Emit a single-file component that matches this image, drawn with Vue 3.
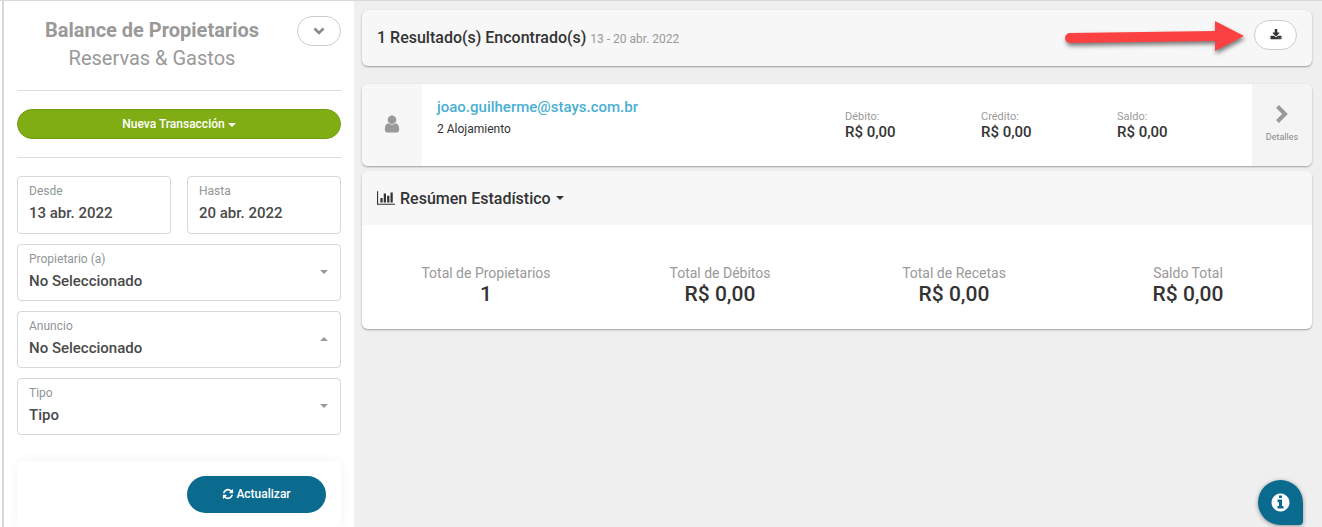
<script setup>
import { ref } from 'vue'

const from = ref('13 abr. 2022')
const to = ref('20 abr. 2022')

const filters = ref([
  { id: 'owner', label: 'Propietario (a)', value: 'No Seleccionado', up: false },
  { id: 'listing', label: 'Anuncio', value: 'No Seleccionado', up: true },
  { id: 'type', label: 'Tipo', value: 'Tipo', up: false },
])

const amounts = [
  { label: 'Débito:', value: 'R$ 0,00' },
  { label: 'Crédito:', value: 'R$ 0,00' },
  { label: 'Saldo:', value: 'R$ 0,00' },
]

const totals = [
  { label: 'Total de Propietarios', value: '1' },
  { label: 'Total de Débitos', value: 'R$ 0,00' },
  { label: 'Total de Recetas', value: 'R$ 0,00' },
  { label: 'Saldo Total', value: 'R$ 0,00' },
]

const showStats = ref(true)
</script>

<template>
  <div class="layout">
    <aside class="sidebar">
      <header class="side-head">
        <h1 class="title">
          Balance de Propietarios
          <small>Reservas &amp; Gastos</small>
        </h1>
        <button class="pill" type="button" aria-label="Más opciones">
          <svg class="icon-down" viewBox="0 0 12 8"><path d="M1.5 1.5L6 6l4.500-4.500" /></svg>
        </button>
      </header>

      <div class="new-wrap">
        <button class="btn-new" type="button">Nueva Transacción <span class="caret"></span></button>
      </div>

      <form class="filters" @submit.prevent>
        <div class="dates">
          <div class="field">
            <label for="from">Desde</label>
            <input id="from" v-model="from" type="text" />
          </div>
          <div class="field">
            <label for="to">Hasta</label>
            <input id="to" v-model="to" type="text" />
          </div>
        </div>
        <div v-for="f in filters" :key="f.id" class="field">
          <label :for="f.id">{{ f.label }}</label>
          <select :id="f.id" v-model="f.value">
            <option>{{ f.value }}</option>
          </select>
          <span class="caret field-caret" :class="{ up: f.up }"></span>
        </div>
        <div class="actions">
          <button class="btn-update" type="submit">
            <svg viewBox="0 0 1792 1792"><path d="M1639 1056q0 5-1 7-64 268-268 434.500t-478 166.500q-146 0-282.500-55t-243.500-157l-129 129q-19 19-45 19t-45-19-19-45v-448q0-26 19-45t45-19h448q26 0 45 19t19 45-19 45l-137 137q71 66 161 102t187 36q134 0 250-65t186-179q11-17 53-117 8-23 30-23h192q13 0 22.500 9.500t9.500 22.500zm25-800v448q0 26-19 45t-45 19h-448q-26 0-45-19t-19-45 19-45l138-138q-148-137-349-137-134 0-250 65t-186 179q-11 17-53 117-8 23-30 23h-199q-13 0-22.500-9.500t-9.500-22.500v-7q65-268 270-434.500t480-166.500q146 0 284 55.500t245 156.500l130-129q19-19 45-19t45 19 19 45z" /></svg>
            Actualizar
          </button>
        </div>
      </form>
    </aside>

    <main class="content">
      <section class="card result-head">
        <h2>1 Resultado(s) Encontrado(s) <small>13 - 20 abr. 2022</small></h2>
        <svg class="arrow" viewBox="0 0 184 40">
          <path d="M8 15L153 13V3L182 18L153 33V23L8 25A5 5 0 0 1 8 15Z" />
        </svg>
        <button class="pill" type="button" aria-label="Descargar">
          <svg class="icon-download" viewBox="0 0 1792 1792"><path d="M1344 1344q0-26-19-45t-45-19-45 19-19 45 19 45 45 19 45-19 19-45zm256 0q0-26-19-45t-45-19-45 19-19 45 19 45 45 19 45-19 19-45zm128-224v320q0 40-28 68t-68 28h-1472q-40 0-68-28t-28-68v-320q0-40 28-68t68-28h465l135 136q58 56 136 56t136-56l136-136h464q40 0 68 28t28 68zm-325-569q17 41-14 70l-448 448q-18 19-45 19t-45-19l-448-448q-31-29-14-70 17-39 59-39h256v-448q0-26 19-45t45-19h256q26 0 45 19t19 45v448h256q42 0 59 39z" /></svg>
        </button>
      </section>

      <section class="card owner">
        <div class="avatar">
          <svg viewBox="0 0 1792 1792"><path d="M1536 1399q0 109-62.500 187t-150.500 78h-854q-88 0-150.500-78t-62.500-187q0-85 8.500-160.500t31.500-152 58.500-131 94-89 134.500-34.500q131 128 313 128t313-128q76 0 134.500 34.500t94 89 58.500 131 31.500 152 8.500 160.500zm-256-887q0 159-112.500 271.500t-271.500 112.500-271.500-112.500-112.500-271.500 112.500-271.500 271.500-112.500 271.500 112.500 112.500 271.500z" /></svg>
        </div>
        <div class="owner-info">
          <a href="#">joao.guilherme@stays.com.br</a>
          <p>2 Alojamiento</p>
        </div>
        <dl class="amounts">
          <div v-for="a in amounts" :key="a.label">
            <dt>{{ a.label }}</dt>
            <dd>{{ a.value }}</dd>
          </div>
        </dl>
        <button class="details" type="button">
          <svg viewBox="0 0 14 20"><path d="M2.500 2.500L10 10l-7.500 7.500" /></svg>
          Detalles
        </button>
      </section>

      <section class="card stats">
        <button class="stats-head" type="button" :aria-expanded="showStats" @click="showStats = !showStats">
          <svg viewBox="0 0 2048 1792"><path d="M640 896v512h-256v-512h256zm384-512v1024h-256v-1024h256zm1024 1152v128h-2048v-1536h128v1408h1920zm-640-896v768h-256v-768h256zm384-384v1152h-256v-1152h256z" /></svg>
          <span>Resúmen Estadístico</span>
          <span class="caret"></span>
        </button>
        <dl v-if="showStats" class="totals">
          <div v-for="t in totals" :key="t.label">
            <dt>{{ t.label }}</dt>
            <dd>{{ t.value }}</dd>
          </div>
        </dl>
      </section>
    </main>

    <button class="help" type="button" aria-label="Información">
      <svg viewBox="0 0 1792 1792"><path d="M1152 1376v-160q0-14-9-23t-23-9h-96v-512q0-14-9-23t-23-9h-320q-14 0-23 9t-9 23v160q0 14 9 23t23 9h96v320h-96q-14 0-23 9t-9 23v160q0 14 9 23t23 9h448q14 0 23-9t9-23zm-128-896v-160q0-14-9-23t-23-9h-192q-14 0-23 9t-9 23v160q0 14 9 23t23 9h192q14 0 23-9t9-23zm640 416q0 209-103 385.500t-279.500 279.500-385.500 103-385.500-103-279.500-279.500-103-385.500 103-385.500 279.500-279.500 385.500-103 385.500 103 279.500 279.500 103 385.500z" /></svg>
    </button>
  </div>
</template>

<style>
body {
  background: #efefef;
}
</style>

<style scoped>
.layout {
  display: flex;
  min-height: 100vh;
  box-sizing: border-box;
  border-top: 1px solid #d9d9d9;
  background: #efefef;
  color: #333;
  font-family: Roboto, 'Liberation Sans', sans-serif;
  font-size: 12px;
}

.layout * {
  box-sizing: border-box;
}

h1,
h2,
p,
dl,
dd {
  margin: 0;
}

button,
input,
select {
  font-family: inherit;
  cursor: pointer;
}

svg {
  display: block;
  flex: none;
  fill: currentColor;
}

.sidebar {
  flex: none;
  width: 352px;
  margin-left: 2px;
  padding: 15px 13px 0;
  border-left: 2px solid #d9d9d9;
  background: #fff;
  box-shadow: -2px 0 #fff;
}

.side-head {
  display: flex;
  align-items: flex-start;
  gap: 10px;
  padding-bottom: 18px;
  border-bottom: 1px solid #ddd;
}

.title {
  flex: 1;
  color: #999;
  font-size: 20px;
  font-weight: 700;
  line-height: 28px;
  text-align: center;
}

.title small {
  display: block;
  font-size: 20px;
  font-weight: 400;
}

.pill {
  display: flex;
  align-items: center;
  justify-content: center;
  flex: none;
  width: 44px;
  height: 30px;
  padding: 0;
  border: 1px solid #ccc;
  border-radius: 15px;
  background: #fff;
  color: #333;
}

.icon-down {
  width: 12px;
  height: 8px;
  fill: none;
  stroke: #888;
  stroke-width: 2.5;
}

.icon-download {
  width: 12px;
  height: 12px;
}

.caret {
  display: inline-block;
  border: 4px solid transparent;
  border-top-color: currentColor;
  border-bottom: 0;
  vertical-align: middle;
}

.caret.up {
  border-top: 0;
  border-bottom: 4px solid currentColor;
}

.new-wrap {
  padding: 18px 0;
  border-bottom: 1px solid #ddd;
}

.btn-new {
  display: block;
  width: 100%;
  height: 30px;
  padding: 0;
  border: 1px solid #739c14;
  border-radius: 15px;
  background: #80ad14;
  color: #fff;
  font-size: 12px;
  font-weight: 500;
}

.filters {
  display: flex;
  flex-direction: column;
  gap: 10px;
  padding-top: 18px;
}

.dates {
  display: grid;
  grid-template-columns: 1fr 1fr;
  gap: 16px;
}

.field {
  position: relative;
  height: 57px;
  padding: 6px 11px;
  border: 1px solid #d5d8d8;
  border-radius: 4px;
}

.dates .field {
  height: 58px;
}

.field label {
  display: block;
  color: #8f9696;
  font-size: 12px;
  line-height: 16px;
}

.field input,
.field select {
  display: block;
  width: 100%;
  height: 28px;
  padding: 0;
  border: 0;
  background: transparent;
  color: #4a4a4a;
  font-size: 15px;
  font-weight: 500;
  appearance: none;
}

.field-caret {
  position: absolute;
  top: 25px;
  right: 12px;
  color: #999;
  pointer-events: none;
}

.actions {
  display: flex;
  justify-content: flex-end;
  margin-top: 16px;
  padding: 15px 15px 14px;
  border-radius: 6px;
  box-shadow: 0 0 12px rgba(0, 0, 0, 0.05);
}

.btn-update {
  display: flex;
  align-items: center;
  justify-content: center;
  gap: 2px;
  width: 139px;
  height: 37px;
  padding: 0 6px 2px;
  border: 0;
  border-radius: 19px;
  background: #0b6b8f;
  color: #fff;
  font-size: 12px;
  font-weight: 500;
}

.btn-update svg {
  width: 12px;
  height: 12px;
}

.content {
  flex: 1;
  min-width: 0;
  padding: 9px 10px 20px 8px;
}

.card {
  overflow: hidden;
  border-radius: 6px;
  background: #fff;
  box-shadow: 0 1px 2px rgba(0, 0, 0, 0.35);
}

.result-head {
  position: relative;
  display: flex;
  align-items: center;
  justify-content: space-between;
  height: 56px;
  margin-bottom: 18px;
  padding: 0 15px 2px;
  background: #f7f7f7;
}

.result-head h2 {
  font-size: 16px;
  font-weight: 500;
}

.result-head small {
  color: #999;
  font-size: 12px;
  font-weight: 400;
}

.result-head .pill {
  width: 43px;
  margin-bottom: 4px;
}

.arrow {
  position: absolute;
  top: 8px;
  right: 66px;
  width: 184px;
  height: 40px;
  fill: #fb4141;
  filter: drop-shadow(1px 3px 2px rgba(0, 0, 0, 0.5));
}

.owner {
  display: flex;
  min-height: 82px;
  margin-bottom: 5px;
}

.avatar {
  display: flex;
  align-items: center;
  justify-content: center;
  width: 60px;
  padding-bottom: 2px;
  background: #f7f7f7;
  color: #999;
}

.avatar svg {
  width: 20px;
  height: 20px;
}

.owner-info {
  flex: 1;
  padding: 13px 15px;
}

.owner-info a {
  display: block;
  color: #4bafd2;
  font-size: 15px;
  font-weight: 500;
  line-height: 20px;
  text-decoration: none;
}

.owner-info p {
  line-height: 24px;
}

.amounts {
  display: grid;
  grid-template-columns: repeat(3, 136px);
  margin-right: -1px;
  padding-top: 26px;
}

.amounts dt {
  color: #999;
  font-size: 11px;
  line-height: 14px;
}

.amounts dd {
  font-size: 15px;
  font-weight: 500;
  line-height: 16px;
}

.details {
  display: flex;
  flex-direction: column;
  align-items: center;
  justify-content: center;
  gap: 8px;
  width: 60px;
  padding: 0 0 4px;
  border: 0;
  background: #f4f4f4;
  color: #888;
  font-size: 9px;
}

.details svg {
  width: 14px;
  height: 20px;
  fill: none;
  stroke: #999;
  stroke-width: 4;
}

.stats-head {
  display: flex;
  align-items: center;
  gap: 5px;
  width: 100%;
  height: 54px;
  padding: 0 15px;
  border: 0;
  background: #f7f7f7;
  color: #333;
  font-size: 16px;
  font-weight: 500;
}

.stats-head svg {
  width: 18px;
  height: 16px;
}

.totals {
  display: grid;
  grid-template-columns: repeat(4, 1fr);
  padding: 38px 7px 24px;
  text-align: center;
}

.totals dt {
  color: #999;
  font-size: 14px;
  line-height: 20px;
}

.totals dd {
  font-size: 21px;
  font-weight: 500;
  line-height: 22px;
}

.help {
  position: fixed;
  right: 19px;
  bottom: 2px;
  display: flex;
  align-items: center;
  justify-content: center;
  width: 45px;
  height: 45px;
  padding: 0;
  border: 0;
  border-radius: 50% 50% 4px 50%;
  background: #0b6b8f;
  color: #fff;
  box-shadow: 0 1px 4px rgba(0, 0, 0, 0.4);
}

.help svg {
  width: 21px;
  height: 21px;
}
</style>
